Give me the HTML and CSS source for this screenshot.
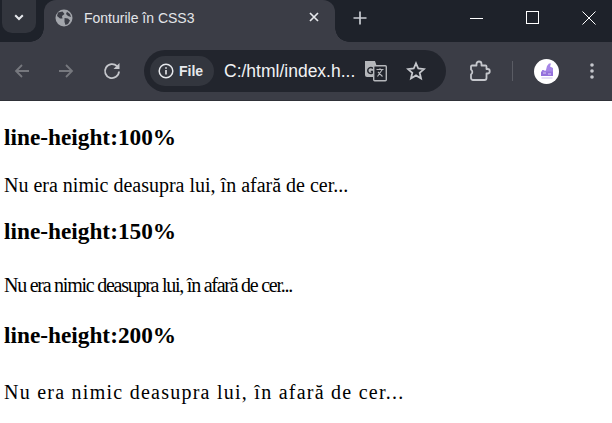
FILE: index.html
```html
<!DOCTYPE html>
<html lang="ro">
<head>
<meta charset="utf-8">
<title>Fonturile în CSS3</title>
<link rel="stylesheet" href="styles.css">
</head>
<body>
<header class="chrome">
  <div class="tabstrip">
    <div class="tabsearch">
      <svg width="16" height="16" viewBox="0 0 16 16"><path d="M4.200 6.200 8 10l3.800-3.800" fill="none" stroke="#e6e8ec" stroke-width="2"/></svg>
    </div>
    <div class="tab">
      <svg class="favicon" width="18" height="18" viewBox="0 0 18 18"><circle cx="9" cy="9" r="8.500" fill="#a3a6ac"/><path d="M3 3.500 7.500 2.500 9.500 5 7 7 7.500 9.500 5 9.500 2 7ZM9.500 9 13 9.500 15 11.500 13 15 10.500 16 9.500 13ZM12 2.800 15 5 16 8 13 7 11 5Z" fill="#3b3d46"/></svg>
      <span class="tab-title">Fonturile în CSS3</span>
      <svg class="tab-close" width="10" height="10" viewBox="0 0 10 10"><path d="M1 1l8 8M9 1 1 9" stroke="#e6e8ec" stroke-width="1.700"/></svg>
    </div>
    <svg class="newtab" width="14" height="14" viewBox="0 0 14 14"><path d="M7 .5v13M.5 7h13" stroke="#c9ccd2" stroke-width="1.700"/></svg>
    <div class="winctl">
      <svg width="14" height="14" viewBox="0 0 14 14"><path d="M0 7.500h13" stroke="#fff" stroke-width="1"/></svg>
      <svg width="14" height="14" viewBox="0 0 14 14"><rect x=".5" y=".5" width="12" height="12" fill="none" stroke="#fff"/></svg>
      <svg width="14" height="14" viewBox="0 0 14 14"><path d="M.5.500l13 13M13.500.500l-13 13" stroke="#fff" stroke-width="1"/></svg>
    </div>
  </div>
  <div class="toolbar">
    <svg class="nav" width="18" height="18" viewBox="0 0 18 18"><path d="M16 9H3M9 3 3 9l6 6" fill="none" stroke="#76787e" stroke-width="1.800"/></svg>
    <svg class="nav" width="18" height="18" viewBox="0 0 18 18"><path d="M2 9h13M9 3l6 6-6 6" fill="none" stroke="#76787e" stroke-width="1.800"/></svg>
    <svg class="nav" width="18" height="18" viewBox="0 0 18 18"><path d="M16 9.500A7 7 0 1 1 14 4.200" fill="none" stroke="#c5c7cc" stroke-width="1.800"/><path d="M16.500 1v6h-6Z" fill="#c5c7cc"/></svg>
    <div class="omnibox">
      <div class="chip">
        <svg width="16" height="16" viewBox="0 0 16 16"><circle cx="8" cy="8" r="6.800" fill="none" stroke="#e6e8ec" stroke-width="1.500"/><path d="M8 7v4.500M8 4.300v1.500" stroke="#e6e8ec" stroke-width="1.600"/></svg>
        <span class="chip-label">File</span>
      </div>
      <span class="url">C:/html/index.h...</span>
      <svg class="translate" width="22" height="22" viewBox="0 0 22 22"><path d="M0 1h10l1.500 4.500V17H2a2 2 0 0 1-2-2Z" fill="#b5b7bb"/><path d="M8 8.500a3 3 0 1 0 .6 3H5.800" fill="none" stroke="#22252d" stroke-width="1.500"/><rect x="8.700" y="5.700" width="12.600" height="15" rx="1" fill="#22252d" stroke="#b5b7bb" stroke-width="1.400"/><path d="M11.500 9.500h7M15 8.300v1.200M17.300 9.500 12.500 16.500M13 12l4.500 4.500" fill="none" stroke="#b5b7bb" stroke-width="1.100"/></svg>
      <svg class="star" width="20" height="20" viewBox="0 0 20 20"><path d="M10 2.300l2.300 5.200 5.700.6-4.300 3.700 1.300 5.600-5-3-5 3 1.300-5.600L2 8.100l5.700-.6Z" fill="none" stroke="#c5c7cc" stroke-width="1.800"/></svg>
    </div>
    <svg class="ext" width="22" height="22" viewBox="0 0 22 22"><path d="M3 5.500h4.500V4a2.500 2.500 0 0 1 5 0v1.500h4a1 1 0 0 1 1 1V9h1a2.200 2.200 0 0 1 0 4.500h-1V18a2 2 0 0 1-2 2H4a2 2 0 0 1-2-2v-3.500a3 3 0 0 0 0-5V6.500a1 1 0 0 1 1-1Z" fill="none" stroke="#c5c7cc" stroke-width="1.800" stroke-linejoin="round"/></svg>
    <span class="divider"></span>
    <div class="avatar">
      <svg width="20" height="20" viewBox="0 0 20 20"><path d="M5 9h4l1-4 2-2.500h2L13 5.500l3 1.500v4H5Z" fill="#a585e6"/><path d="M4 10.500h12V15H4Z" fill="#9470dc"/><path d="M6 12h3M11 13h3M7 9.500h2" stroke="#d9c9f5" stroke-width="1"/><path d="M4.500 17h11" stroke="#cdbfec" stroke-width="1"/></svg>
    </div>
    <svg class="menu" width="6" height="18" viewBox="0 0 6 18"><circle cx="3" cy="3" r="1.800" fill="#c5c7cc"/><circle cx="3" cy="9" r="1.800" fill="#c5c7cc"/><circle cx="3" cy="15" r="1.800" fill="#c5c7cc"/></svg>
  </div>
</header>
<main class="page">
  <h2 class="heading">line-height:100%</h2>
  <p class="sample lh100">Nu era nimic deasupra lui, în afară de cer...</p>
  <h2 class="heading">line-height:150%</h2>
  <p class="sample lh150">Nu era nimic deasupra lui, în afară de cer...</p>
  <h2 class="heading">line-height:200%</h2>
  <p class="sample lh200">Nu era nimic deasupra lui, în afară de cer...</p>
</main>
</body>
</html>
```
FILE: styles.css
```css
* { box-sizing: border-box; }
html, body { margin: 0; padding: 0; background: #fff; }
body { width: 612px; height: 423px; overflow: hidden; }

.chrome { font-family: "Open Sans", "Noto Sans", sans-serif; }

.tabstrip {
  display: flex;
  align-items: flex-start;
  height: 42px;
  background: #1e222a;
}
.tabsearch {
  width: 34px;
  height: 33px;
  margin-left: 2px;
  border-radius: 0 0 10px 10px;
  background: #32353d;
  display: flex;
  align-items: center;
  justify-content: center;
}
.tab {
  position: relative;
  width: 291px;
  height: 42px;
  margin-left: 8px;
  padding: 0 16px 0 11px;
  background: #3b3d46;
  border-radius: 12px 12px 0 0;
  display: flex;
  align-items: center;
  color: #e3e5e9;
  font-size: 14px;
}
.tab::before, .tab::after {
  content: "";
  position: absolute;
  bottom: 0;
  width: 14px;
  height: 14px;
}
.tab::before {
  left: -14px;
  background: radial-gradient(circle at 0 0, transparent 13.500px, #3b3d46 14px);
}
.tab::after {
  right: -14px;
  background: radial-gradient(circle at 100% 0, transparent 13.500px, #3b3d46 14px);
}
.favicon { flex: none; margin-top: -6px; }
.tab-title { margin-left: 11px; flex: 1; margin-top: -6px; font-family: "Liberation Sans", sans-serif; }
.tab-close { flex: none; margin-top: -8px; }
.newtab { flex: none; margin: 11px 0 0 18px; }
.winctl {
  margin-left: auto;
  display: flex;
  gap: 42px;
  padding: 11px 16px 0 0;
}

.toolbar {
  display: flex;
  align-items: center;
  height: 59px;
  padding: 0 0 0 13px;
  background: #3b3d46;
  border-bottom: 1px solid #2f3138;
}
.nav { flex: none; margin-right: 26px; }
.nav:nth-child(2) { margin-right: 28px; }
.nav:nth-child(3) { margin-right: 23px; }
.omnibox {
  width: 302px;
  height: 42px;
  padding: 0 20px 0 6px;
  border-radius: 21px;
  background: #22252d;
  display: flex;
  align-items: center;
}
.chip {
  width: 64px;
  height: 30px;
  padding-left: 8px;
  border-radius: 15px;
  background: #33363e;
  display: flex;
  align-items: center;
  gap: 5px;
}
.chip-label {
  color: #e6e8ec;
  font: bold 14px "Liberation Sans", sans-serif;
}
.url {
  margin-left: 10px;
  color: #f1f2f4;
  font: 17.500px "Liberation Sans", sans-serif;
  white-space: nowrap;
  flex: 1;
}
.translate { flex: none; margin-right: 19px; }
.star { flex: none; }
.ext { flex: none; margin-left: 23px; }
.divider {
  width: 1px;
  height: 20px;
  margin-left: 21px;
  background: #5a5c64;
}
.avatar {
  width: 25px;
  height: 25px;
  margin-left: 21px;
  border-radius: 50%;
  background: #fff;
  display: flex;
  align-items: center;
  justify-content: center;
}
.menu { flex: none; margin-left: 30px; }

.page {
  padding: 24px 4px 0;
  color: #000;
  font-family: "Liberation Serif", "Times New Roman", serif;
}
.heading {
  margin: 0;
  font-size: 23.300px;
  font-weight: bold;
  line-height: 25px;
}
.sample { margin: 0; font-size: 20px; }
.lh100 { line-height: 100%; letter-spacing: 0; margin: 25px 0 24px; }
.lh150 { line-height: 150%; letter-spacing: -1.250px; margin: 26px 0 23px; }
.lh200 { line-height: 200%; letter-spacing: 1.250px; margin: 24px 0 0; }
```
